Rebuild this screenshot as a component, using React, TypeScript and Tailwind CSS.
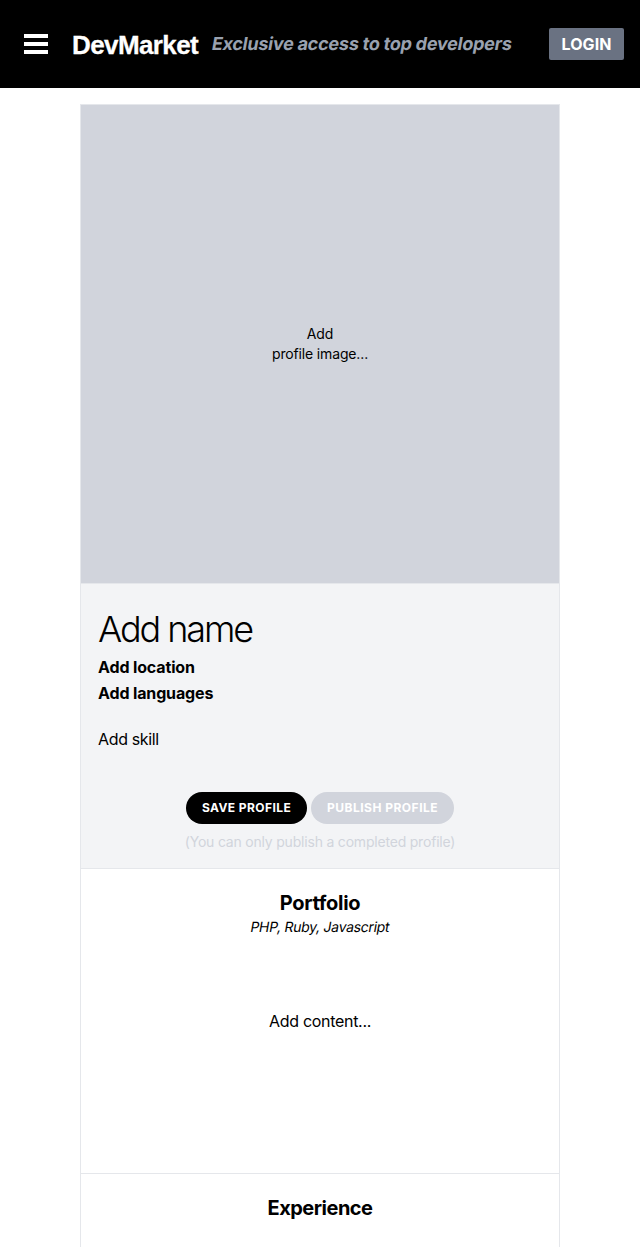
import React from "react";

function Header() {
  return (
    <header className="flex h-[88px] items-center bg-black pl-6 pr-4">
      <button aria-label="Menu" className="flex h-5 w-6 shrink-0 flex-col justify-between">
        <span className="h-1 w-6 bg-white" />
        <span className="h-1 w-6 bg-white" />
        <span className="h-1 w-6 bg-white" />
      </button>
      <a className="ml-6 w-[140px] shrink-0 whitespace-nowrap pt-px font-['Liberation_Sans',sans-serif] text-[26px] font-bold leading-8 tracking-[-0.6px] text-white [-webkit-text-stroke:0.3px_white]">
        DevMarket
      </a>
      <p className="-skew-x-[10deg] whitespace-nowrap text-[18px] font-bold leading-7 tracking-[-0.24px] text-gray-400">
        Exclusive access to top developers
      </p>
      <button className="ml-auto h-8 w-[75px] shrink-0 rounded-xs bg-gray-500 text-base font-bold tracking-[0.1px] text-white">
        LOGIN
      </button>
    </header>
  );
}

export default function App() {
  return (
    <div className="h-[1247px] overflow-hidden bg-white font-['Inter',sans-serif] text-black">
      <Header />
      <main className="mx-auto mt-4 w-[480px] border border-gray-200">
        <div className="flex h-[478px] items-center justify-center bg-[#d1d4dc] text-center text-sm leading-5 tracking-[-0.15px]">
          <p>
            Add
            <br />
            profile image...
          </p>
        </div>
        <section className="h-[285px] border-t border-gray-200 bg-[#f3f4f6] px-[17px] pt-[25px]">
          <h1 className="text-4xl font-light leading-10 tracking-[-2.1px]">Add name</h1>
          <p className="mt-[5px] text-base font-bold leading-[26px] tracking-[-0.14px]">
            <span className="block w-max">Add location</span>
            <span className="block w-max">Add languages</span>
          </p>
          <p className="mt-[21px] w-max text-base leading-6 tracking-[-0.35px]">Add skill</p>
          <div className="mt-[41px] flex justify-center gap-1">
            <button className="h-8 w-[121px] rounded-full bg-black text-xs font-bold tracking-[0.42px] text-white">
              SAVE PROFILE
            </button>
            <button className="h-8 w-[143px] rounded-full bg-[#d1d4dc] text-xs font-bold tracking-[0.5px] text-white">
              PUBLISH PROFILE
            </button>
          </div>
          <p className="mt-2 text-center text-sm leading-5 tracking-[-0.2px] text-[#d1d4dc]">
            (You can only publish a completed profile)
          </p>
        </section>
        <section className="h-[305px] border-t border-gray-200 pt-5 text-center">
          <h2 className="text-xl font-bold leading-7 tracking-[-0.3px]">Portfolio</h2>
          <p className="-skew-x-[10deg] text-sm leading-5 tracking-[-0.3px]">PHP, Ruby, Javascript</p>
          <p className="mt-[72px] text-base leading-6 tracking-[-0.3px]">Add content...</p>
        </section>
        <section className="h-[305px] border-t border-gray-200 pt-5 text-center">
          <h2 className="text-xl font-bold leading-7 tracking-[-0.5px]">Experience</h2>
        </section>
      </main>
    </div>
  );
}
